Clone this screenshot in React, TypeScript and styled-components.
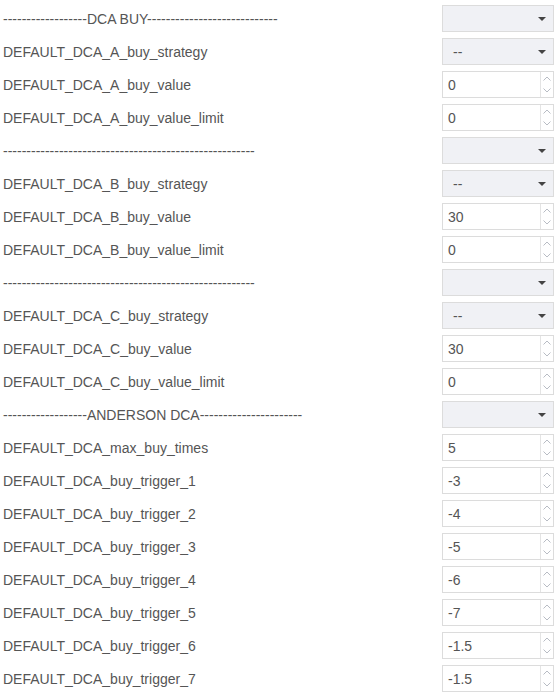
import React from "react";
import styled, { createGlobalStyle } from "styled-components";

const GlobalStyle = createGlobalStyle`
  html, body {
    margin: 0;
    padding: 0;
    background: #ffffff;
  }
  body {
    font-family: "Liberation Sans", Arial, sans-serif;
  }
`;

const Page = styled.div`
  padding: 5px 6px 0 3px;
  display: flex;
  flex-direction: column;
  gap: 6px;
`;

const Row = styled.div`
  display: flex;
  align-items: center;
  justify-content: space-between;
  height: 27px;
`;

const Label = styled.div`
  font-size: 14px;
  color: #555555;
  white-space: nowrap;
`;

const SelectBox = styled.div`
  position: relative;
  width: 112px;
  height: 27px;
  box-sizing: border-box;
  border: 1px solid #dcdcdc;
  background: #f0f1f5;
  display: flex;
  align-items: center;
  padding: 0 10px;
  font-size: 14px;
  color: #555555;
`;

const Caret = styled.svg`
  position: absolute;
  right: 7px;
  top: 11px;
`;

const NumberBox = styled.div`
  width: 112px;
  height: 27px;
  box-sizing: border-box;
  border: 1px solid #dcdcdc;
  background: #ffffff;
  display: flex;
`;

const NumberValue = styled.div`
  flex: 1;
  display: flex;
  align-items: center;
  padding: 0 5px;
  font-size: 14px;
  color: #555555;
`;

const Spinner = styled.div`
  width: 12px;
  border-left: 1px solid #e4e4e4;
  display: flex;
  flex-direction: column;
`;

const SpinHalf = styled.div`
  flex: 1;
  display: flex;
  align-items: center;
  justify-content: center;
`;

type Item =
  | { kind: "select"; label: string; value: string }
  | { kind: "number"; label: string; value: string };

const dashes = (n: number) => "-".repeat(n);

const items: Item[] = [
  { kind: "select", label: `${dashes(18)}DCA BUY${dashes(28)}`, value: "" },
  { kind: "select", label: "DEFAULT_DCA_A_buy_strategy", value: "--" },
  { kind: "number", label: "DEFAULT_DCA_A_buy_value", value: "0" },
  { kind: "number", label: "DEFAULT_DCA_A_buy_value_limit", value: "0" },
  { kind: "select", label: dashes(54), value: "" },
  { kind: "select", label: "DEFAULT_DCA_B_buy_strategy", value: "--" },
  { kind: "number", label: "DEFAULT_DCA_B_buy_value", value: "30" },
  { kind: "number", label: "DEFAULT_DCA_B_buy_value_limit", value: "0" },
  { kind: "select", label: dashes(54), value: "" },
  { kind: "select", label: "DEFAULT_DCA_C_buy_strategy", value: "--" },
  { kind: "number", label: "DEFAULT_DCA_C_buy_value", value: "30" },
  { kind: "number", label: "DEFAULT_DCA_C_buy_value_limit", value: "0" },
  { kind: "select", label: `${dashes(18)}ANDERSON DCA${dashes(22)}`, value: "" },
  { kind: "number", label: "DEFAULT_DCA_max_buy_times", value: "5" },
  { kind: "number", label: "DEFAULT_DCA_buy_trigger_1", value: "-3" },
  { kind: "number", label: "DEFAULT_DCA_buy_trigger_2", value: "-4" },
  { kind: "number", label: "DEFAULT_DCA_buy_trigger_3", value: "-5" },
  { kind: "number", label: "DEFAULT_DCA_buy_trigger_4", value: "-6" },
  { kind: "number", label: "DEFAULT_DCA_buy_trigger_5", value: "-7" },
  { kind: "number", label: "DEFAULT_DCA_buy_trigger_6", value: "-1.5" },
  { kind: "number", label: "DEFAULT_DCA_buy_trigger_7", value: "-1.5" },
];

const Chevron = ({ up }: { up: boolean }) => (
  <svg width="8" height="5" viewBox="0 0 8 5">
    <path
      d={up ? "M0.5 4.5 L4 1 L7.5 4.5" : "M0.5 0.5 L4 4 L7.5 0.5"}
      fill="none"
      stroke="#b8bcc4"
      strokeWidth="1"
    />
  </svg>
);

const App = () => {
  return (
    <>
      <GlobalStyle />
      <Page>
        {items.map((item, i) => (
          <Row key={i}>
            <Label>{item.label}</Label>
            {item.kind === "select" ? (
              <SelectBox>
                {item.value}
                <Caret width="8" height="4" viewBox="0 0 8 4">
                  <path d="M0 0 L8 0 L4 4 Z" fill="#444444" />
                </Caret>
              </SelectBox>
            ) : (
              <NumberBox>
                <NumberValue>{item.value}</NumberValue>
                <Spinner>
                  <SpinHalf><Chevron up /></SpinHalf>
                  <SpinHalf><Chevron up={false} /></SpinHalf>
                </Spinner>
              </NumberBox>
            )}
          </Row>
        ))}
      </Page>
    </>
  );
};

export default App;
